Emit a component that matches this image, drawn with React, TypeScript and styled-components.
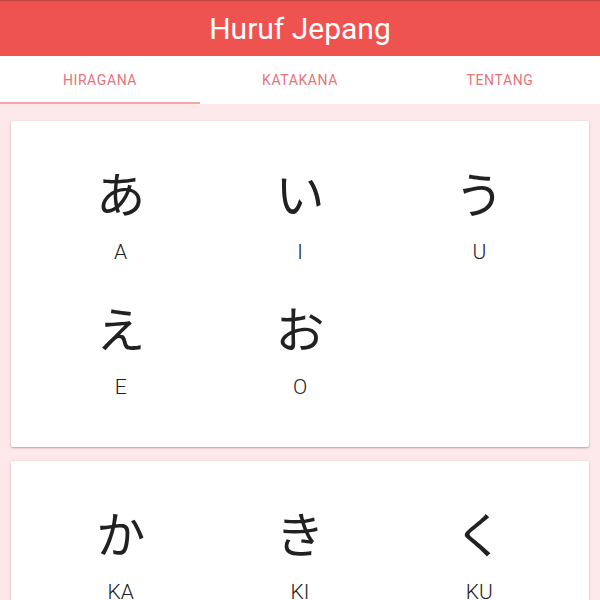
import React from "react";
import styled, { createGlobalStyle } from "styled-components";

const Global = createGlobalStyle`
  html, body { margin: 0; padding: 0; }
  body { background: #fde8ea; font-family: Roboto, "Noto Sans", sans-serif; overflow: hidden; }
`;

const Page = styled.div`
  width: 600px;
  height: 600px;
  display: flex;
  flex-direction: column;
  background: #fde8ea;
  overflow: hidden;
`;

const Header = styled.header`
  height: 56px;
  flex: none;
  background: #ef5350;
  display: flex;
  align-items: center;
  justify-content: center;
  box-shadow: inset 0 2px 2px -1px rgba(0, 0, 0, 0.25);
`;

const Title = styled.h1`
  margin: 0;
  color: #fff;
  font-family: Roboto, sans-serif;
  font-weight: 400;
  font-size: 30px;
`;

const Tabs = styled.nav`
  height: 48px;
  flex: none;
  background: #fff;
  display: grid;
  grid-template-columns: repeat(3, 1fr);
`;

const Tab = styled.div<{ $active?: boolean }>`
  display: flex;
  align-items: center;
  justify-content: center;
  padding-top: 1px;
  font-family: Roboto, sans-serif;
  font-size: 14px;
  letter-spacing: 0.6px;
  color: #e5737a;
  border-bottom: 2px solid ${(p) => (p.$active ? "#f4a7ab" : "transparent")};
`;

const Content = styled.main`
  padding: 17px 11px 0;
  display: flex;
  flex-direction: column;
  gap: 14px;
`;

const Card = styled.section`
  background: #fff;
  border-radius: 2px;
  box-shadow: 0 1px 3px rgba(0, 0, 0, 0.22), 0 1px 1px rgba(0, 0, 0, 0.1);
  padding: 30px 20px 26px;
  display: grid;
  grid-template-columns: repeat(3, 1fr);
`;

const Cell = styled.div`
  height: 135px;
  display: flex;
  flex-direction: column;
  align-items: center;
  padding-top: 11px;
  box-sizing: border-box;
`;

const Kana = styled.div`
  font-family: "Noto Sans CJK JP", sans-serif;
  font-size: 49px;
  line-height: 60px;
  color: #212121;
`;

const Romaji = styled.div`
  margin-top: 18px;
  font-family: Roboto, sans-serif;
  font-weight: 300;
  font-size: 21px;
  line-height: 24px;
  color: #212121;
`;

const groups = [
  [["あ", "A"], ["い", "I"], ["う", "U"], ["え", "E"], ["お", "O"]],
  [["か", "KA"], ["き", "KI"], ["く", "KU"], ["け", "KE"], ["こ", "KO"]],
];

export default function App() {
  return (
    <Page>
      <Global />
      <Header>
        <Title>Huruf Jepang</Title>
      </Header>
      <Tabs>
        <Tab $active>HIRAGANA</Tab>
        <Tab>KATAKANA</Tab>
        <Tab>TENTANG</Tab>
      </Tabs>
      <Content>
        {groups.map((g, i) => (
          <Card key={i}>
            {g.map(([k, r]) => (
              <Cell key={r}>
                <Kana>{k}</Kana>
                <Romaji>{r}</Romaji>
              </Cell>
            ))}
          </Card>
        ))}
      </Content>
    </Page>
  );
}
